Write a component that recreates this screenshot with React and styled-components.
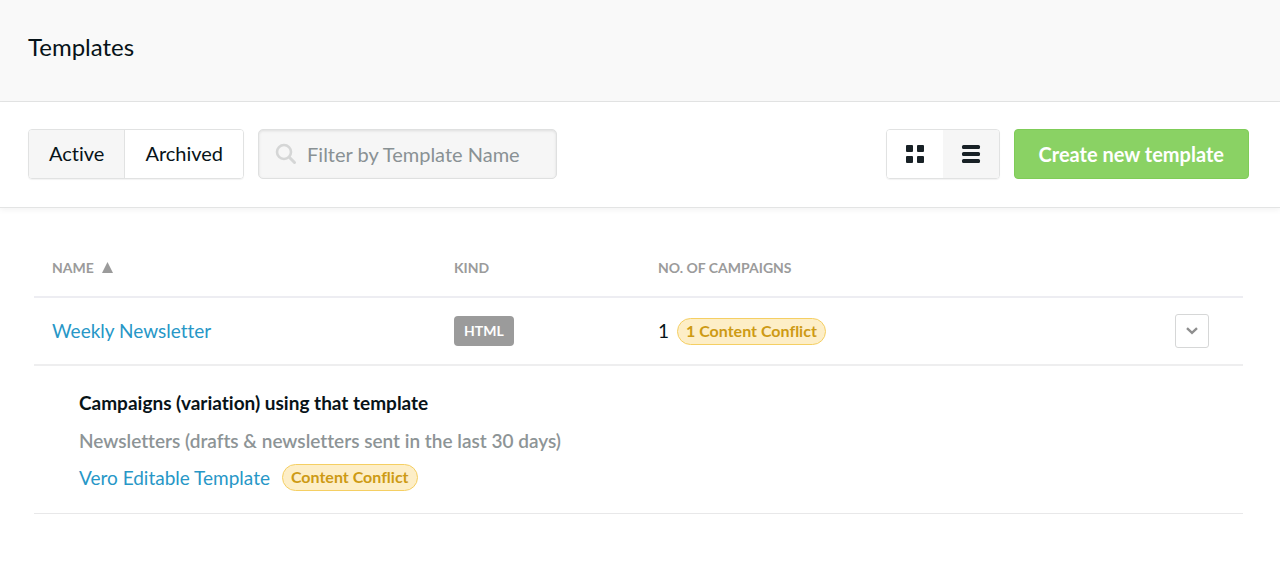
import React, { useState } from "react";
import styled, { createGlobalStyle } from "styled-components";

const GlobalStyle = createGlobalStyle`
  * {
    box-sizing: border-box;
  }

  body {
    margin: 0;
    background: #fff;
    color: #071318;
    font-family: Lato, "Open Sans", sans-serif;
    font-size: 19px;
    line-height: 24px;
    font-variant-ligatures: none;
  }

  button,
  input {
    font: inherit;
    color: inherit;
    font-variant-ligatures: none;
  }
`;

const Header = styled.header`
  padding: 31px 28px 38px;
  background: #f9f9f9;
  border-bottom: 1px solid #e3e4e4;
`;

const Title = styled.h1`
  margin: 0;
  font-size: 24px;
  line-height: 32px;
  font-weight: 400;
`;

const Toolbar = styled.div`
  display: flex;
  align-items: center;
  gap: 14px;
  padding: 27px 31px 28px 28px;
  border-bottom: 1px solid #e3e4e4;
  box-shadow: 0 2px 6px rgba(0, 0, 0, 0.05);
`;

const ButtonGroup = styled.div`
  display: flex;
  height: 50px;
  overflow: hidden;
  border: 1px solid #e1e2e2;
  border-radius: 4px;
  box-shadow: 0 1px 1px rgba(0, 0, 0, 0.05);
`;

const Tab = styled.button`
  padding: 0 20px 2px;
  border: none;
  background: ${(props) => (props.$active ? "#f6f6f6" : "#fff")};
  font-size: 20px;
  cursor: pointer;

  & + & {
    border-left: 1px solid #e1e2e2;
  }
`;

const ViewButton = styled.button`
  display: flex;
  align-items: center;
  justify-content: center;
  width: 56px;
  padding: 0;
  border: none;
  background: ${(props) => (props.$active ? "#f6f6f6" : "#fff")};
  cursor: pointer;
`;

const SearchBox = styled.label`
  display: flex;
  align-items: center;
  gap: 10px;
  width: 299px;
  height: 50px;
  padding: 0 16px;
  background: #f6f6f6;
  border: 1px solid #dfe0e0;
  border-radius: 5px;
  box-shadow: inset 0 1px 3px rgba(0, 0, 0, 0.1);
`;

const SearchInput = styled.input`
  flex: 1;
  min-width: 0;
  padding: 0;
  border: none;
  outline: none;
  background: transparent;
  font-size: 20px;

  &::placeholder {
    color: #899194;
    opacity: 1;
  }
`;

const Actions = styled.div`
  display: flex;
  gap: 14px;
  margin-left: auto;
`;

const CreateButton = styled.button`
  height: 50px;
  padding: 0 24px;
  border: 1px solid #7fcc58;
  border-radius: 4px;
  background: #8ad264;
  color: #fff;
  font-size: 20px;
  font-weight: 700;
  cursor: pointer;
`;

const Content = styled.main`
  padding: 32px 37px 72px 34px;
`;

const Table = styled.table`
  width: 100%;
  border-collapse: separate;
  border-spacing: 0;
  table-layout: fixed;
`;

const Column = styled.col`
  width: ${(props) => props.$width};
`;

const HeadCell = styled.th`
  height: 58px;
  padding: 0 18px;
  border-bottom: 2px solid #ededf2;
  color: #9b9b9b;
  font-size: 14px;
  font-weight: 700;
  text-align: left;
  text-transform: uppercase;

  svg {
    margin-left: 8px;
  }
`;

const Cell = styled.td`
  height: 68px;
  padding: 0 18px;
  border-bottom: 2px solid #eeeeef;
  text-align: ${(props) => props.$align || "left"};
`;

const DetailCell = styled.td`
  padding: 25px 45px 22px;
  border-bottom: 1px solid #e8e8e9;
`;

const Link = styled.a`
  color: #2797c7;
  text-decoration: none;

  &:hover {
    text-decoration: underline;
  }
`;

const KindTag = styled.span`
  display: inline-block;
  height: 30px;
  padding: 0 10px;
  border-radius: 4px;
  background: #9b9b9b;
  color: #fff;
  font-size: 14px;
  line-height: 30px;
  font-weight: 700;
  vertical-align: middle;
`;

const Inline = styled.div`
  display: flex;
  align-items: center;
  gap: ${(props) => props.$gap || "12px"};
`;

const Badge = styled.span`
  height: 27px;
  padding: 0 8px;
  border: 1px solid #f5cf63;
  border-radius: 14px;
  background: #fdeec7;
  color: #cd9a14;
  font-size: 16px;
  line-height: 24px;
  font-weight: 700;
`;

const MenuButton = styled.button`
  display: inline-flex;
  align-items: center;
  justify-content: center;
  width: 34px;
  height: 34px;
  margin-right: 16px;
  padding: 0;
  border: 1px solid #d6d7d7;
  border-radius: 3px;
  background: #fff;
  vertical-align: middle;
  cursor: pointer;
`;

const DetailTitle = styled.h2`
  margin: 0 0 14px;
  font-size: 19px;
  line-height: 24px;
  font-weight: 700;
`;

const DetailNote = styled.p`
  margin: 0 0 11px;
  color: #8d9496;
  font-weight: 600;
`;

const SearchIcon = () => (
  <svg width="22" height="22" viewBox="0 0 22 22" fill="none" stroke="#d5d6d6" aria-hidden="true">
    <circle cx="9" cy="9" r="7" strokeWidth="2.6" />
    <path d="M14.3 14.3l5.2 5.2" strokeWidth="3" strokeLinecap="round" />
  </svg>
);

const GridIcon = () => (
  <svg width="20" height="20" viewBox="0 0 20 20" fill="#182126" aria-hidden="true">
    <rect x="1" y="1" width="7" height="7" rx="1" />
    <rect x="12" y="1" width="7" height="7" rx="1" />
    <rect x="1" y="12" width="7" height="7" rx="1" />
    <rect x="12" y="12" width="7" height="7" rx="1" />
  </svg>
);

const ListIcon = () => (
  <svg width="20" height="20" viewBox="0 0 20 20" fill="#182126" aria-hidden="true">
    <rect x="1" y="1" width="18" height="4" rx="1.5" />
    <rect x="1" y="8" width="18" height="4" rx="1.5" />
    <rect x="1" y="15" width="18" height="4" rx="1.5" />
  </svg>
);

const SortIcon = () => (
  <svg width="11" height="11" viewBox="0 0 11 11" fill="#9b9b9b" aria-hidden="true">
    <path d="M5.5 0L11 11H0z" />
  </svg>
);

const ChevronIcon = () => (
  <svg width="12" height="8" viewBox="0 0 12 8" fill="none" stroke="#8f8f8f" aria-hidden="true">
    <path d="M1 1.2l5 4.6 5-4.6" strokeWidth="2.4" />
  </svg>
);

function App() {
  const [tab, setTab] = useState("active");
  const [view, setView] = useState("list");
  const [filter, setFilter] = useState("");

  return (
    <>
      <GlobalStyle />
      <Header>
        <Title>Templates</Title>
      </Header>
      <Toolbar>
        <ButtonGroup>
          <Tab $active={tab === "active"} onClick={() => setTab("active")}>
            Active
          </Tab>
          <Tab $active={tab === "archived"} onClick={() => setTab("archived")}>
            Archived
          </Tab>
        </ButtonGroup>
        <SearchBox>
          <SearchIcon />
          <SearchInput
            type="text"
            aria-label="Filter by Template Name"
            placeholder="Filter by Template Name"
            value={filter}
            onChange={(e) => setFilter(e.target.value)}
          />
        </SearchBox>
        <Actions>
          <ButtonGroup>
            <ViewButton aria-label="Grid view" $active={view === "grid"} onClick={() => setView("grid")}>
              <GridIcon />
            </ViewButton>
            <ViewButton aria-label="List view" $active={view === "list"} onClick={() => setView("list")}>
              <ListIcon />
            </ViewButton>
          </ButtonGroup>
          <CreateButton>Create new template</CreateButton>
        </Actions>
      </Toolbar>
      <Content>
        <Table>
          <colgroup>
            <Column $width="402px" />
            <Column $width="204px" />
            <Column />
            <Column $width="120px" />
          </colgroup>
          <thead>
            <tr>
              <HeadCell>
                Name
                <SortIcon />
              </HeadCell>
              <HeadCell>Kind</HeadCell>
              <HeadCell>No. of campaigns</HeadCell>
              <HeadCell aria-label="Actions" />
            </tr>
          </thead>
          <tbody>
            <tr>
              <Cell>
                <Link href="#weekly-newsletter">Weekly Newsletter</Link>
              </Cell>
              <Cell>
                <KindTag>HTML</KindTag>
              </Cell>
              <Cell>
                <Inline $gap="8px">
                  <span>1</span>
                  <Badge>1 Content Conflict</Badge>
                </Inline>
              </Cell>
              <Cell $align="right">
                <MenuButton aria-label="Template options">
                  <ChevronIcon />
                </MenuButton>
              </Cell>
            </tr>
            <tr>
              <DetailCell colSpan={4}>
                <DetailTitle>Campaigns (variation) using that template</DetailTitle>
                <DetailNote>Newsletters (drafts &amp; newsletters sent in the last 30 days)</DetailNote>
                <Inline>
                  <Link href="#vero-editable-template">Vero Editable Template</Link>
                  <Badge>Content Conflict</Badge>
                </Inline>
              </DetailCell>
            </tr>
          </tbody>
        </Table>
      </Content>
    </>
  );
}

export default App;
